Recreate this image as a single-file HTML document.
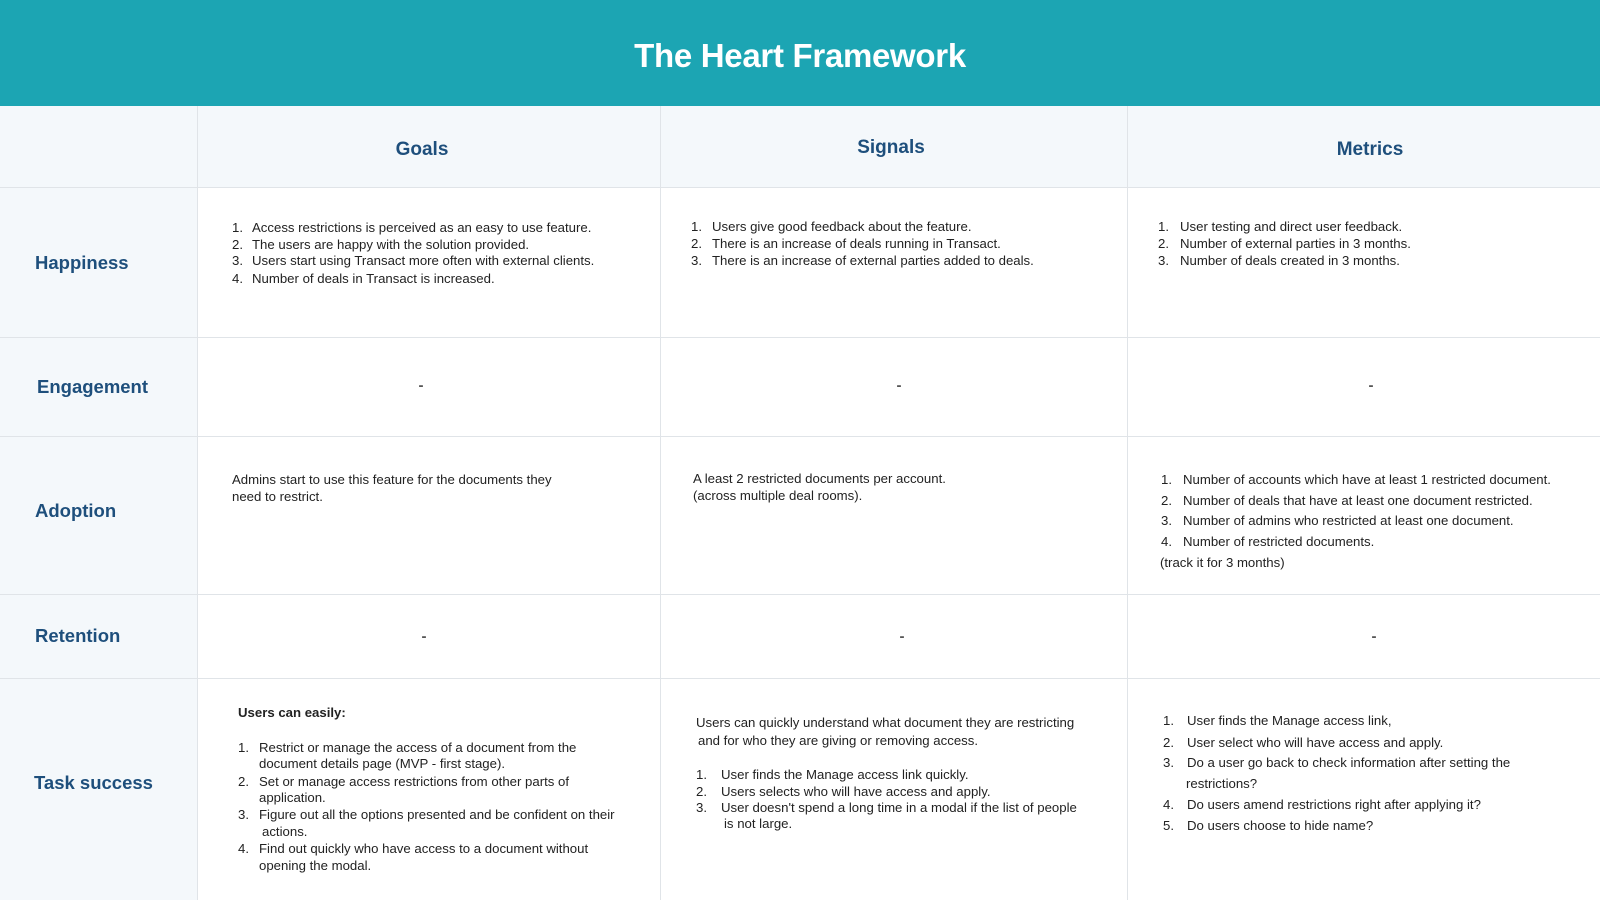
<!DOCTYPE html>
<html><head><meta charset="utf-8"><style>
*{margin:0;padding:0;box-sizing:border-box}
body{width:1600px;height:900px;position:relative;overflow:hidden;background:#fff;font-family:"Liberation Sans",sans-serif;color:#2b2b2b}
.hdr{position:absolute;left:0;top:0;width:1600px;height:106px;background:#1ca5b3}
.title{position:absolute;left:0;width:1600px;top:37px;text-align:center;color:#fff;font-size:33px;font-weight:bold;letter-spacing:-0.3px}
.bg{position:absolute;background:#f4f8fb}
.h{position:absolute;height:1px;background:#e0e4e8;left:0;width:1600px}
.v{position:absolute;width:1px;background:#e0e4e8;top:106px;height:794px}
.lab{position:absolute;font-size:18.5px;font-weight:bold;color:#1e4f7c;line-height:22px}
.ch{position:absolute;font-size:19px;font-weight:bold;color:#1e4f7c;line-height:22px;transform:translateX(-50%)}
.t{position:absolute;font-size:13.2px;line-height:16px;white-space:nowrap;color:#222}
.d{position:absolute;font-size:15px;font-weight:bold;line-height:16px;color:#555;transform:translateX(-50%)}
</style></head><body>
<div class="hdr"></div>
<div class="title">The Heart Framework</div>
<div class="bg" style="left:0;top:106px;width:1600px;height:81px"></div>
<div class="bg" style="left:0;top:106px;width:197px;height:794px"></div>
<div class="h" style="top:187px"></div>
<div class="h" style="top:337px"></div>
<div class="h" style="top:436px"></div>
<div class="h" style="top:594px"></div>
<div class="h" style="top:678px"></div>
<div class="v" style="left:197px"></div>
<div class="v" style="left:660px"></div>
<div class="v" style="left:1127px"></div>

<div class="ch" style="left:422px;top:139px">Goals</div>
<div class="ch" style="left:891px;top:137px">Signals</div>
<div class="ch" style="left:1370px;top:139px">Metrics</div>

<div class="lab" style="left:35px;top:252px">Happiness</div>
<div class="lab" style="left:37px;top:376px">Engagement</div>
<div class="lab" style="left:35px;top:500px">Adoption</div>
<div class="lab" style="left:35px;top:625px">Retention</div>
<div class="lab" style="left:34px;top:772px">Task success</div>

<div class="t" style="left:232px;top:220px">1.</div><div class="t" style="left:252px;top:220px">Access restrictions is perceived as an easy to use feature.</div>
<div class="t" style="left:232px;top:237px">2.</div><div class="t" style="left:252px;top:237px">The users are happy with the solution provided.</div>
<div class="t" style="left:232px;top:253px">3.</div><div class="t" style="left:252px;top:253px">Users start using Transact more often with external clients.</div>
<div class="t" style="left:232px;top:271px">4.</div><div class="t" style="left:252px;top:271px">Number of deals in Transact is increased.</div>

<div class="t" style="left:691px;top:219px">1.</div><div class="t" style="left:712px;top:219px">Users give good feedback about the feature.</div>
<div class="t" style="left:691px;top:236px">2.</div><div class="t" style="left:712px;top:236px">There is an increase of deals running in Transact.</div>
<div class="t" style="left:691px;top:253px">3.</div><div class="t" style="left:712px;top:253px">There is an increase of external parties added to deals.</div>

<div class="t" style="left:1158px;top:219px">1.</div><div class="t" style="left:1180px;top:219px">User testing and direct user feedback.</div>
<div class="t" style="left:1158px;top:236px">2.</div><div class="t" style="left:1180px;top:236px">Number of external parties in 3 months.</div>
<div class="t" style="left:1158px;top:253px">3.</div><div class="t" style="left:1180px;top:253px">Number of deals created in 3 months.</div>

<div class="d" style="left:421px;top:378px">-</div>
<div class="d" style="left:899px;top:378px">-</div>
<div class="d" style="left:1371px;top:378px">-</div>

<div class="t" style="left:232px;top:472px">Admins start to use this feature for the documents they</div>
<div class="t" style="left:232px;top:489px">need to restrict.</div>
<div class="t" style="left:693px;top:471px">A least 2 restricted documents per account.</div>
<div class="t" style="left:693px;top:488px">(across multiple deal rooms).</div>

<div class="t" style="left:1161px;top:472px">1.</div><div class="t" style="left:1183px;top:472px">Number of accounts which have at least 1 restricted document.</div>
<div class="t" style="left:1161px;top:493px">2.</div><div class="t" style="left:1183px;top:493px">Number of deals that have at least one document restricted.</div>
<div class="t" style="left:1161px;top:513px">3.</div><div class="t" style="left:1183px;top:513px">Number of admins who restricted at least one document.</div>
<div class="t" style="left:1161px;top:534px">4.</div><div class="t" style="left:1183px;top:534px">Number of restricted documents.</div>
<div class="t" style="left:1160px;top:555px">(track it for 3 months)</div>

<div class="d" style="left:424px;top:629px">-</div>
<div class="d" style="left:902px;top:629px">-</div>
<div class="d" style="left:1374px;top:629px">-</div>

<div class="t" style="left:238px;top:705px;font-weight:bold">Users can easily:</div>
<div class="t" style="left:238px;top:740px">1.</div><div class="t" style="left:259px;top:740px">Restrict or manage the access of a document from the</div>
<div class="t" style="left:259px;top:756px">document details page (MVP - first stage).</div>
<div class="t" style="left:238px;top:774px">2.</div><div class="t" style="left:259px;top:774px">Set or manage access restrictions from other parts of</div>
<div class="t" style="left:259px;top:790px">application.</div>
<div class="t" style="left:238px;top:807px">3.</div><div class="t" style="left:259px;top:807px">Figure out all the options presented and be confident on their</div>
<div class="t" style="left:262px;top:824px">actions.</div>
<div class="t" style="left:238px;top:841px">4.</div><div class="t" style="left:259px;top:841px">Find out quickly who have access to a document without</div>
<div class="t" style="left:259px;top:858px">opening the modal.</div>

<div class="t" style="left:696px;top:715px">Users can quickly understand what document they are restricting</div>
<div class="t" style="left:698px;top:733px">and for who they are giving or removing access.</div>
<div class="t" style="left:696px;top:767px">1.</div><div class="t" style="left:721px;top:767px">User finds the Manage access link quickly.</div>
<div class="t" style="left:696px;top:784px">2.</div><div class="t" style="left:721px;top:784px">Users selects who will have access and apply.</div>
<div class="t" style="left:696px;top:800px">3.</div><div class="t" style="left:721px;top:800px">User doesn't spend a long time in a modal if the list of people</div>
<div class="t" style="left:724px;top:816px">is not large.</div>

<div class="t" style="left:1163px;top:713px">1.</div><div class="t" style="left:1187px;top:713px">User finds the Manage access link,</div>
<div class="t" style="left:1163px;top:735px">2.</div><div class="t" style="left:1187px;top:735px">User select who will have access and apply.</div>
<div class="t" style="left:1163px;top:755px">3.</div><div class="t" style="left:1187px;top:755px">Do a user go back to check information after setting the</div>
<div class="t" style="left:1186px;top:776px">restrictions?</div>
<div class="t" style="left:1163px;top:797px">4.</div><div class="t" style="left:1187px;top:797px">Do users amend restrictions right after applying it?</div>
<div class="t" style="left:1163px;top:818px">5.</div><div class="t" style="left:1187px;top:818px">Do users choose to hide name?</div>
</body></html>
